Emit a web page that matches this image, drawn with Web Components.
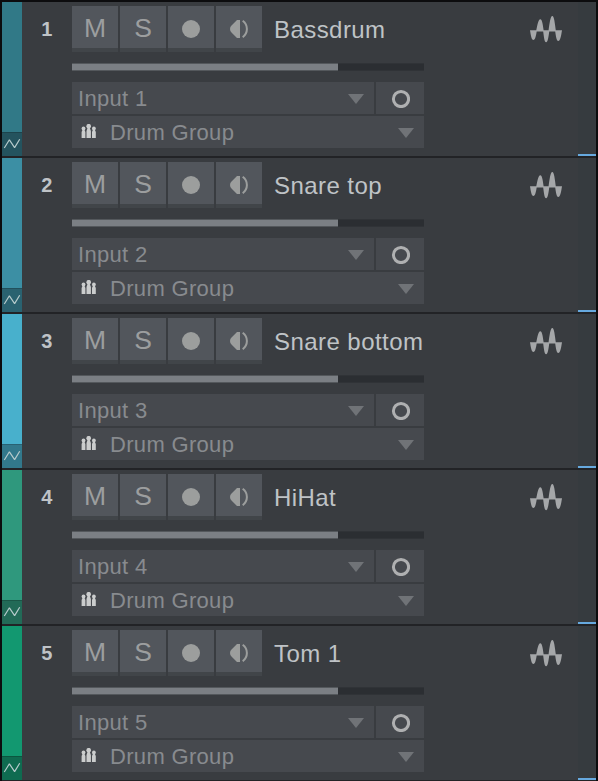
<!DOCTYPE html>
<html lang="en"><head><meta charset="utf-8"><title>Tracks</title>
<style>html,body{margin:0;background:#0e0e10;overflow:hidden}</style></head>
<body><track-list></track-list>
<script>
const define = (name, html, init) => customElements.define(name, class extends HTMLElement {
  connectedCallback() {
    if (this.shadowRoot) return;
    const root = this.attachShadow({mode: 'open'});
    root.innerHTML = html;
    if (init) init(this, root);
  }
});

define('mix-button', `<style>
:host{display:flex;box-sizing:border-box;width:46px;height:46px;background:#52565c;border-bottom:4px solid #414549;align-items:center;justify-content:center;color:#9c9e9f;font-size:26.5px;line-height:40px;padding-top:2px}
</style><slot></slot>`);

define('volume-bar', `<style>
:host{display:block;box-sizing:border-box;width:352px;height:8px;background:#2b2e32;border-top:1px solid #303337;border-bottom:1px solid #303337}
div{width:266px;height:6px;background:#7b7f84;box-shadow:0 -1px #54585c,0 1px #54585c}
</style><div></div>`);

define('route-select', `<style>
:host{display:flex;box-sizing:border-box;height:32px;background:#46494e;align-items:center;padding:0 10px 0 6px;color:#888b8f;font-size:22px;letter-spacing:.32px;flex:1}
span{flex:1;white-space:pre;line-height:30px;padding-top:2px}
svg{display:block;margin-top:2px}
</style><slot name="icon"></slot><span><slot></slot></span><svg width="16" height="10"><path d="M0 0H16L8 10Z" fill="#707377"/></svg>`);

define('people-icon', `<style>:host{display:block;width:15px;height:14px;margin:-2px 14px 0 3px;flex:none}svg{display:block}</style>
<svg width="15" height="14" fill="#cbcdcd"><circle cx="2.5" cy="4.5" r="1.9"/><circle cx="7.7" cy="2.2" r="2.3"/><circle cx="12.9" cy="4.5" r="1.9"/><path d="M1.7 5.5H3.3L4.4 8V14H.6V8ZM6.7 3.5H8.7L9.9 7V14H5.5V7ZM12.1 5.5H13.7L14.8 8V14H11V8Z"/></svg>`);

define('wave-icon', `<style>:host{display:block;width:32px;height:27px}svg{display:block}</style>
<svg width="32" height="27" fill="#a5a7a9"><path d="M0 14.3H6.9C6 20 5.2 24 3.4 24S.9 20 0 14.3ZM6 15.6C7.4 9 8.3 3.2 10.3 3.2S12.8 9 13.9 15.6ZM13 14.3H19.4C18.5 21 17.9 26.2 16.1 26.2S14 21 13 14.3ZM18.4 15.6C19.6 7 20.4 0 22.3 0S24.8 7 26 15.6ZM25 14.3H32C31 20.8 30.1 25 28.3 25S26 20.8 25 14.3Z"/></svg>`);

define('color-strip', `<style>
:host{display:flex;flex-direction:column;width:20px;height:154px;background:var(--tone)}
.fill{height:130px}
.auto{box-sizing:border-box;height:24px;background:var(--deep);border-top:1px solid var(--edge)}
svg{display:block}
</style><div class="fill"></div><div class="auto"><svg width="20" height="23" fill="none" stroke="#b6cacb" stroke-width="1.2" stroke-linejoin="bevel"><path d="M2.3 15 7.4 6.8 12.6 14.6 17.7 6.2"/></svg></div>`);

define('track-row', `<style>
:host{display:grid;grid-template-columns:20px 50px 190px 1fr 18px;height:154px;background:#393c40;border-bottom:2px solid #222326}
.num{color:#bfc3c7;font-weight:bold;font-size:20px;line-height:24px;padding-top:15px;text-align:center;letter-spacing:.3px}
.body{grid-column:3/5;padding-top:4px}
.head{display:flex;height:46px}
.buttons{display:flex;gap:2px;width:190px}
.name{color:#bfc3c6;font-size:24px;line-height:28px;letter-spacing:.44px;padding:10px 0 0 12px;width:256px;box-sizing:border-box;white-space:nowrap}
wave-icon{margin:10px 0 0 12px}
volume-bar{margin-top:11px}
.routes{width:352px;margin-top:11px}
.line{display:flex;gap:2px;margin-bottom:2px}
.record{width:48px;height:32px;background:#46494e;display:grid;place-items:center}
.meter{background:#363b3f;border-bottom:2px solid #66a9df}
svg{display:block}
.buttons svg{margin-top:2px}
</style>
<color-strip></color-strip><div class="num"></div>
<div class="body"><div class="head"><div class="buttons"><mix-button>M</mix-button><mix-button>S</mix-button>
<mix-button><svg width="18" height="18"><circle cx="9" cy="9" r="9" fill="#9c9e9d"/></svg></mix-button>
<mix-button><svg width="18" height="18"><path d="M10 0V18H7L1.5 12.6Q0 11.3 0 9T1.5 5.4L7 0Z" fill="#9c9e9d"/><path d="M12.7 .8Q16.9 4 16.9 9T12.7 17.2" fill="none" stroke="#9c9e9d" stroke-width="2"/></svg></mix-button></div>
<div class="name"></div><wave-icon></wave-icon></div>
<volume-bar></volume-bar><div class="routes">
<div class="line"><route-select class="input"></route-select><div class="record"><svg width="20" height="20"><circle cx="11" cy="11" r="7.6" fill="none" stroke="#afb0b1" stroke-width="3"/></svg></div></div>
<route-select><people-icon slot="icon"></people-icon>Drum Group</route-select></div></div>
<div class="meter"></div>`, (el, root) => {
  root.querySelector('.num').textContent = el.getAttribute('number');
  root.querySelector('.name').textContent = el.getAttribute('name');
  root.querySelector('.input').textContent = 'Input ' + el.getAttribute('number');
});

define('track-list', `<style>
:host{display:block;box-sizing:border-box;width:598px;height:781px;padding:2px 2px 0;background:#0c0c0e;overflow:hidden;font-family:"Liberation Sans",Arial,sans-serif}
</style>
<track-row number="1" name="Bassdrum" style="--tone:#317987;--deep:#24535e;--edge:#1d444d"></track-row>
<track-row number="2" name="Snare top" style="--tone:#3c8fa4;--deep:#2a6270;--edge:#22505c"></track-row>
<track-row number="3" name="Snare bottom" style="--tone:#48b0cc;--deep:#32788b;--edge:#296273"></track-row>
<track-row number="4" name="HiHat" style="--tone:#2f987d;--deep:#226a57;--edge:#1b5647"></track-row>
<track-row number="5" name="Tom 1" style="--tone:#129870;--deep:#0f6b50;--edge:#0b563f"></track-row>`);
</script></body></html>
